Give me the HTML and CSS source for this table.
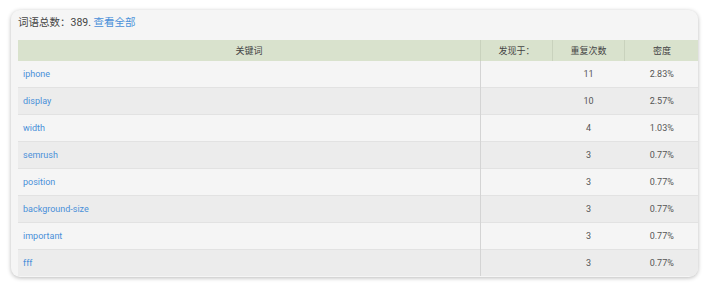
FILE: index.html
```html
<!DOCTYPE html>
<html lang="zh">
<head>
<meta charset="utf-8">
<link rel="stylesheet" href="styles.css">
</head>
<body>
<div class="card">
  <div class="title">词语总数：389. <a class="link" href="#">查看全部</a></div>
  <table class="kw">
    <thead>
      <tr><th class="c-word">关键词</th><th class="c-found">发现于：</th><th class="c-num">重复次数</th><th class="c-den">密度</th></tr>
    </thead>
    <tbody>
      <tr><td><a class="link" href="#">iphone</a></td><td></td><td class="n">11</td><td class="n">2.83%</td></tr>
      <tr><td><a class="link" href="#">display</a></td><td></td><td class="n">10</td><td class="n">2.57%</td></tr>
      <tr><td><a class="link" href="#">width</a></td><td></td><td class="n">4</td><td class="n">1.03%</td></tr>
      <tr><td><a class="link" href="#">semrush</a></td><td></td><td class="n">3</td><td class="n">0.77%</td></tr>
      <tr><td><a class="link" href="#">position</a></td><td></td><td class="n">3</td><td class="n">0.77%</td></tr>
      <tr><td><a class="link" href="#">background-size</a></td><td></td><td class="n">3</td><td class="n">0.77%</td></tr>
      <tr><td><a class="link" href="#">important</a></td><td></td><td class="n">3</td><td class="n">0.77%</td></tr>
      <tr><td><a class="link" href="#">fff</a></td><td></td><td class="n">3</td><td class="n">0.77%</td></tr>
    </tbody>
  </table>
</div>
</body>
</html>
```
FILE: styles.css
```css
html, body { margin: 0; padding: 0; background: #ffffff; }
body {
  padding: 10px 9px 9px 11px;
  font-family: Roboto, "Noto Sans CJK SC", sans-serif;
}
.card {
  width: 687px;
  height: 267px;
  box-sizing: border-box;
  background: #f5f5f5;
  border-radius: 9px;
  box-shadow: 0 1px 4px rgba(0,0,0,0.28);
  padding: 5px 2px 0 7px;
  overflow: hidden;
}
.title {
  font-size: 10.5px;
  line-height: 15px;
  color: #444;
  height: 25px;
}
.link { color: #4a90d9; text-decoration: none; }
.kw {
  width: 678px;
  border-collapse: collapse;
  table-layout: fixed;
  font-size: 9px;
}
.kw th {
  background: #d9e2cd;
  color: #444;
  font-weight: normal;
  height: 21px;
  padding: 0;
  text-align: center;
  border-left: 1px solid #c9d2bd;
}
.kw th:first-child { border-left: none; }
.c-word { width: 462px; }
.c-found { width: 71px; }
.c-num { width: 71px; }
.c-den { width: 74px; }
.kw td {
  height: 26px;
  padding: 0;
  border-top: 1px solid #e2e2e2;
  color: #555;
}
.kw tbody tr:first-child td { border-top: none; height: 26px; }
.kw td:first-child { padding-left: 5px; }
.kw td:nth-child(2) { border-left: 1px solid #d4d4d4; }
.kw tbody tr:nth-child(odd) td { background: #f5f5f5; }
.kw tbody tr:nth-child(even) td { background: #ececec; }
.kw td.n { text-align: center; }
```
